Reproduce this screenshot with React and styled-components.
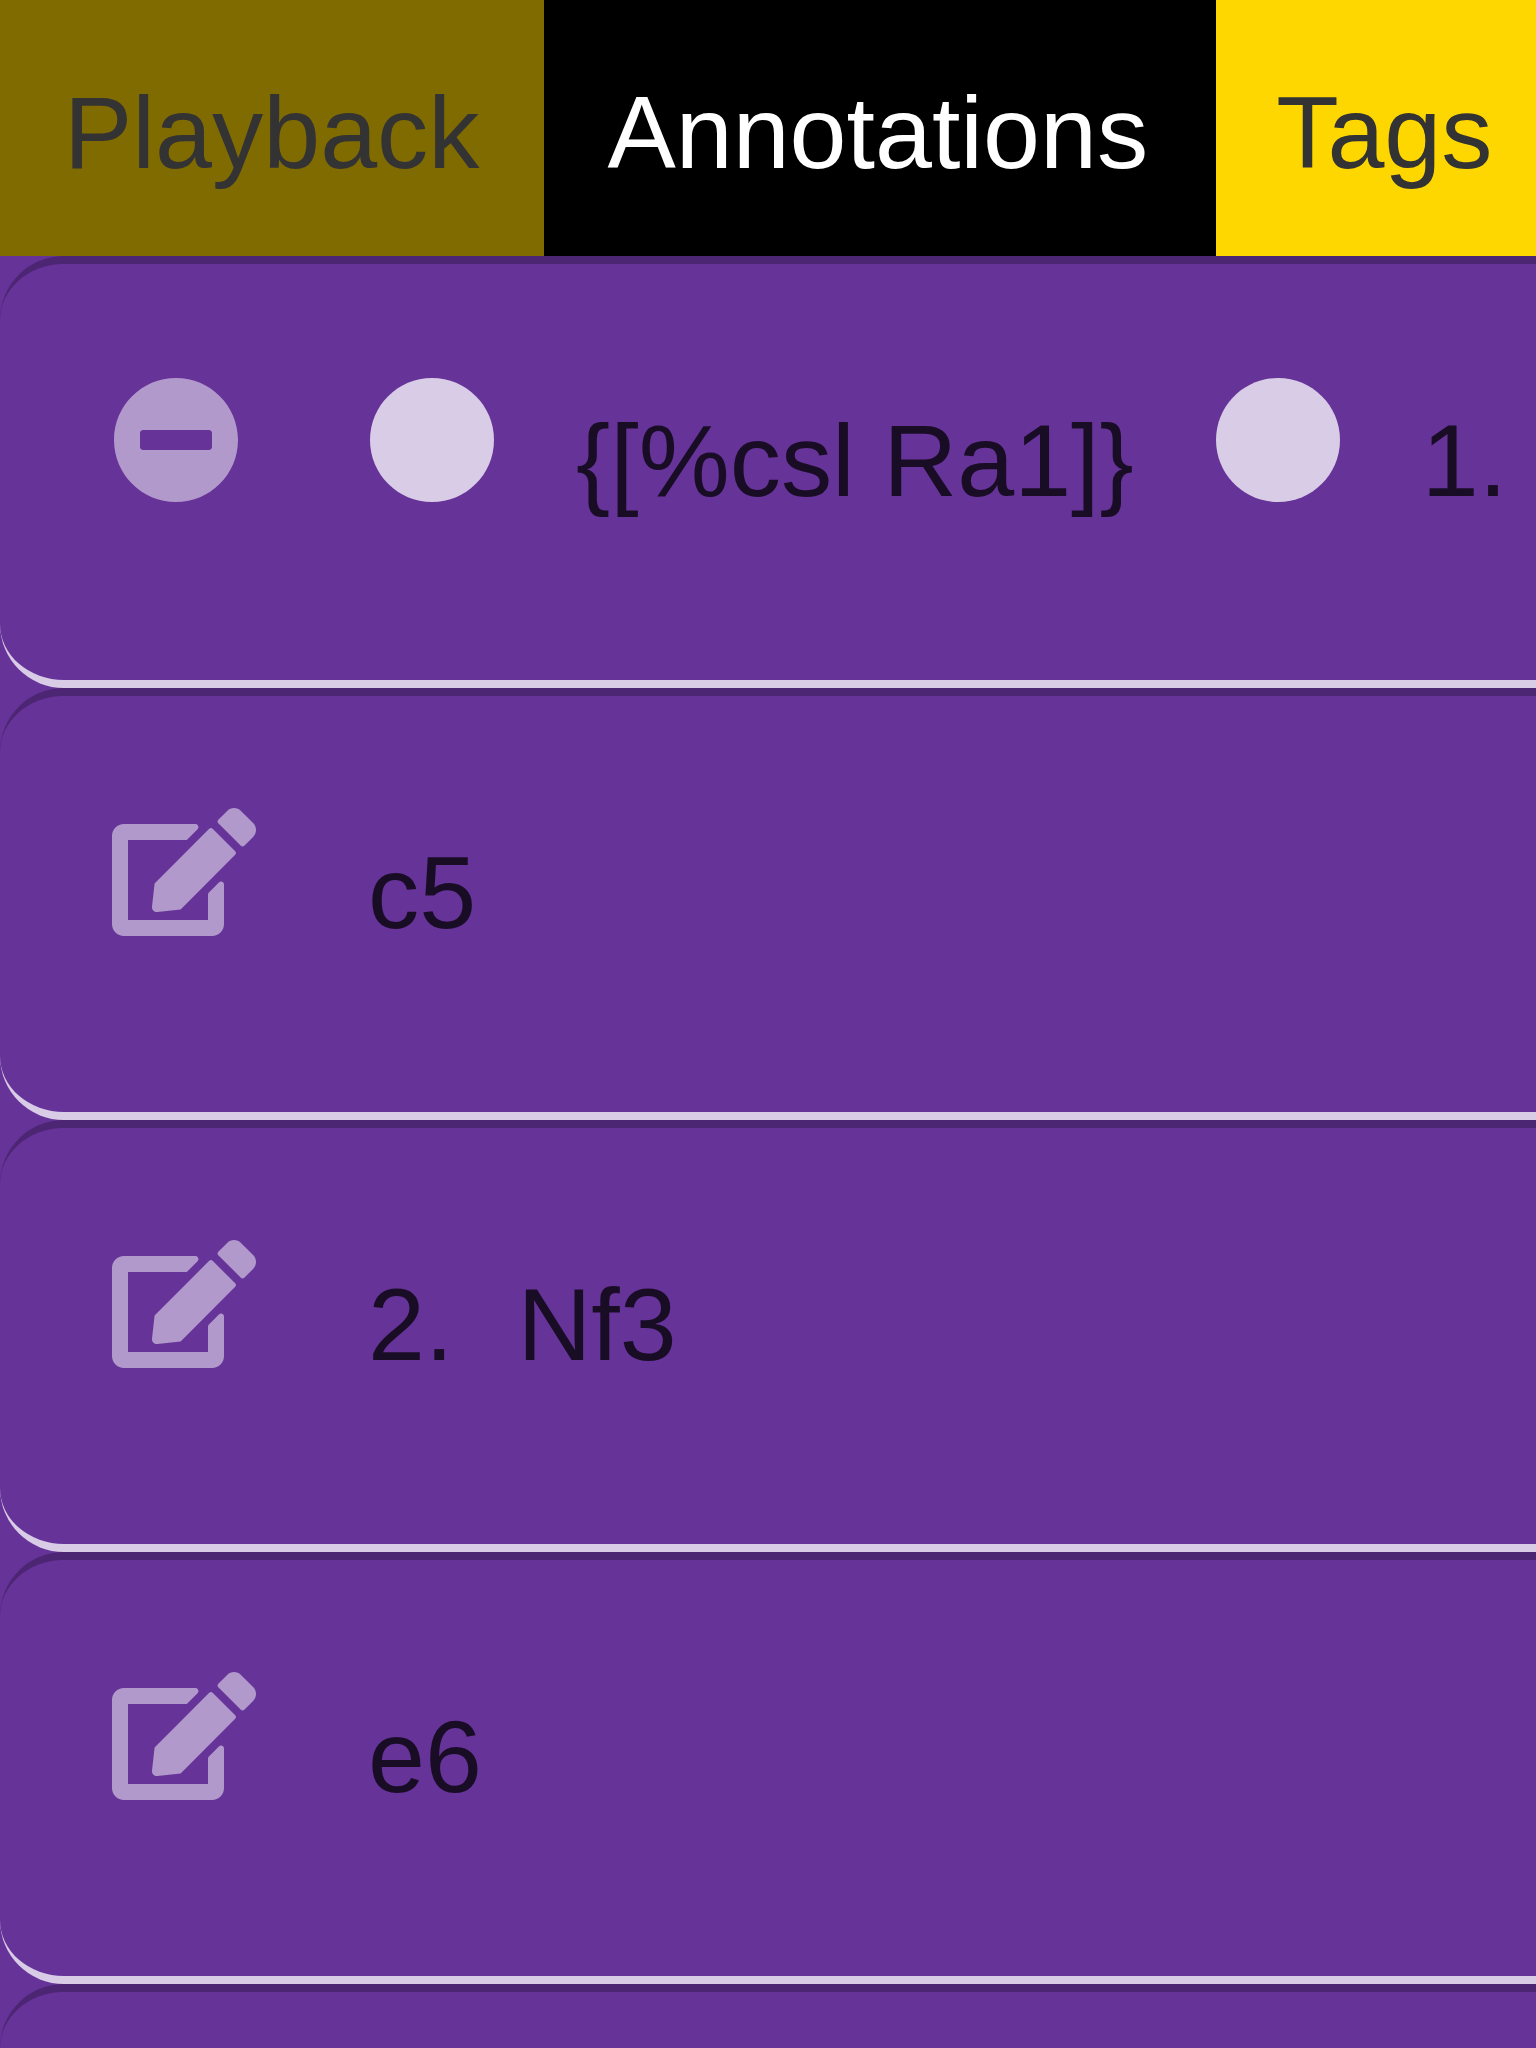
import React from "react";
import styled, { createGlobalStyle } from "styled-components";
import { FaMinusCircle, FaCircle, FaEdit } from "react-icons/fa";

const GlobalStyle = createGlobalStyle`
  html, body {
    margin: 0;
    background: #663399;
    overflow: hidden;
  }
`;

const Page = styled.div`
  display: flex;
  flex-direction: column;
  height: 100vh;
  overflow: hidden;
  background: #663399;
  font-family: "Liberation Sans", Arial, sans-serif;
  font-size: 102.4px;
  line-height: 115px;
`;

const TabBar = styled.nav`
  display: flex;
  flex: none;
  height: 256px;
  background: #ffd700;
`;

const Tab = styled.div`
  box-sizing: border-box;
  flex: ${(p) => (p.$width ? `0 0 ${p.$width}px` : "1 0 0")};
  padding-top: 75px;
  padding-left: ${(p) => p.$inset}px;
  white-space: nowrap;
  color: ${(p) => p.$color || "#333333"};
  background: ${(p) => p.$background || "#ffd700"};
`;

const MoveList = styled.div`
  display: flex;
  flex-direction: column;
  flex: none;
  width: 3000px;
`;

const Row = styled.div`
  box-sizing: border-box;
  display: flex;
  align-items: flex-start;
  height: 432px;
  padding: 112px 112px 0;
  border-top: 8px solid #4d2673;
  border-bottom: 8px solid #d9cce6;
  border-radius: 64px;
  background: #663399;
`;

const Action = styled.div`
  display: flex;
  flex: 0 0 256px;
  color: #b299cc;

  svg {
    display: block;
    flex: none;
    width: ${(p) => p.$iconWidth}px;
    height: 128px;
  }
`;

const Content = styled.div`
  display: flex;
  align-items: flex-start;
  gap: ${(p) => p.$gap || 64}px;
`;

const Marker = styled(FaCircle)`
  display: block;
  flex: none;
  width: 128px;
  height: 128px;
  color: #d9cce6;
`;

const Label = styled.span`
  padding-top: 27px;
  white-space: pre;
  color: #190d26;
`;

const moves = [["c5"], ["2.", "Nf3"], ["e6"]];

export default function App() {
  return (
    <>
      <GlobalStyle />
      <Page>
        <TabBar>
          <Tab $width={544} $inset={64} $background="#806b00">Playback</Tab>
          <Tab $width={672} $inset={63.4} $background="#000000" $color="#ffffff">
            Annotations
          </Tab>
          <Tab $inset={60.2}>Tags</Tab>
        </TabBar>
        <MoveList>
          <Row>
            <Action $iconWidth={128}>
              <FaMinusCircle />
            </Action>
            <Content $gap={80}>
              <Marker />
              <Label>{"{[%csl Ra1]}"}</Label>
              <Marker />
              <Label>1.</Label>
            </Content>
          </Row>
          {moves.map((parts) => (
            <Row key={parts.join(" ")}>
              <Action $iconWidth={144}>
                <FaEdit />
              </Action>
              <Content>
                {parts.map((part) => (
                  <Label key={part}>{part}</Label>
                ))}
              </Content>
            </Row>
          ))}
          <Row />
        </MoveList>
      </Page>
    </>
  );
}
